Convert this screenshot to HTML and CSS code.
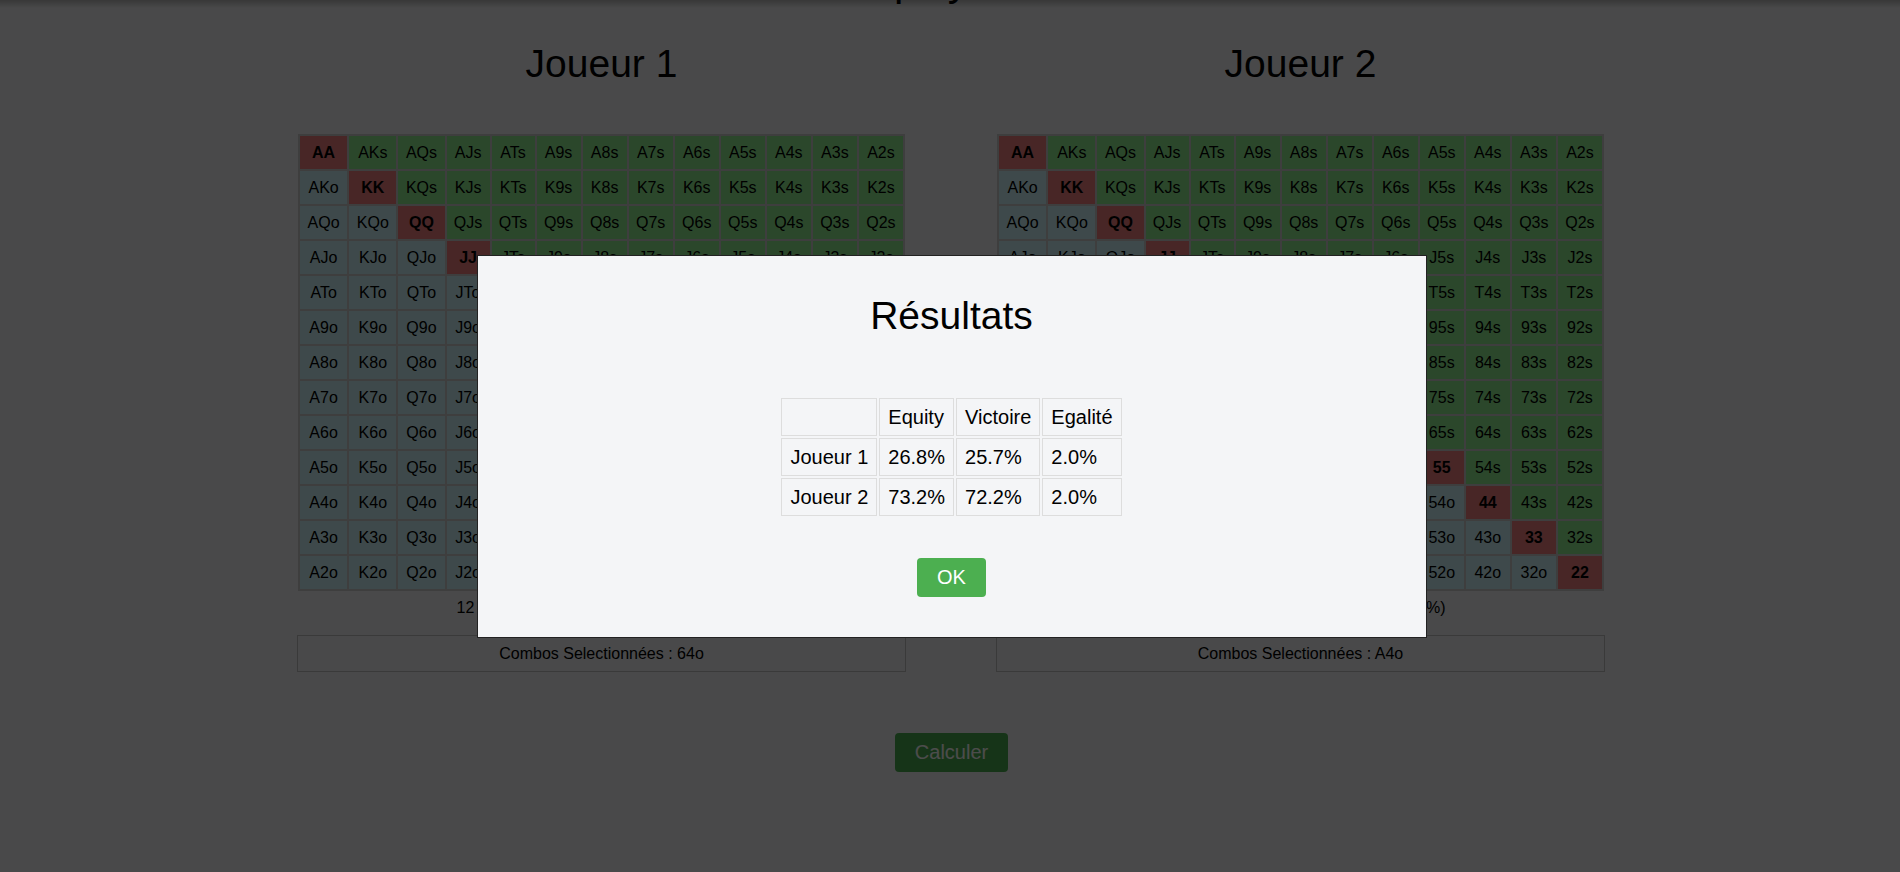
FILE: index.html
```html
<!DOCTYPE html>
<html lang="fr">
<head>
<meta charset="utf-8">
<title>Poker Equity Calculator</title>
<link rel="stylesheet" href="styles.css">
</head>
<body>
<h1 class="page-title">Poker Equity Calculator</h1>
<div class="players">
  <section class="player">
    <h2 class="player-name">Joueur 1</h2>
    <table class="range">
      <tr><td class="p">AA</td><td class="s">AKs</td><td class="s">AQs</td><td class="s">AJs</td><td class="s">ATs</td><td class="s">A9s</td><td class="s">A8s</td><td class="s">A7s</td><td class="s">A6s</td><td class="s">A5s</td><td class="s">A4s</td><td class="s">A3s</td><td class="s">A2s</td></tr>
      <tr><td class="o">AKo</td><td class="p">KK</td><td class="s">KQs</td><td class="s">KJs</td><td class="s">KTs</td><td class="s">K9s</td><td class="s">K8s</td><td class="s">K7s</td><td class="s">K6s</td><td class="s">K5s</td><td class="s">K4s</td><td class="s">K3s</td><td class="s">K2s</td></tr>
      <tr><td class="o">AQo</td><td class="o">KQo</td><td class="p">QQ</td><td class="s">QJs</td><td class="s">QTs</td><td class="s">Q9s</td><td class="s">Q8s</td><td class="s">Q7s</td><td class="s">Q6s</td><td class="s">Q5s</td><td class="s">Q4s</td><td class="s">Q3s</td><td class="s">Q2s</td></tr>
      <tr><td class="o">AJo</td><td class="o">KJo</td><td class="o">QJo</td><td class="p">JJ</td><td class="s">JTs</td><td class="s">J9s</td><td class="s">J8s</td><td class="s">J7s</td><td class="s">J6s</td><td class="s">J5s</td><td class="s">J4s</td><td class="s">J3s</td><td class="s">J2s</td></tr>
      <tr><td class="o">ATo</td><td class="o">KTo</td><td class="o">QTo</td><td class="o">JTo</td><td class="p">TT</td><td class="s">T9s</td><td class="s">T8s</td><td class="s">T7s</td><td class="s">T6s</td><td class="s">T5s</td><td class="s">T4s</td><td class="s">T3s</td><td class="s">T2s</td></tr>
      <tr><td class="o">A9o</td><td class="o">K9o</td><td class="o">Q9o</td><td class="o">J9o</td><td class="o">T9o</td><td class="p">99</td><td class="s">98s</td><td class="s">97s</td><td class="s">96s</td><td class="s">95s</td><td class="s">94s</td><td class="s">93s</td><td class="s">92s</td></tr>
      <tr><td class="o">A8o</td><td class="o">K8o</td><td class="o">Q8o</td><td class="o">J8o</td><td class="o">T8o</td><td class="o">98o</td><td class="p">88</td><td class="s">87s</td><td class="s">86s</td><td class="s">85s</td><td class="s">84s</td><td class="s">83s</td><td class="s">82s</td></tr>
      <tr><td class="o">A7o</td><td class="o">K7o</td><td class="o">Q7o</td><td class="o">J7o</td><td class="o">T7o</td><td class="o">97o</td><td class="o">87o</td><td class="p">77</td><td class="s">76s</td><td class="s">75s</td><td class="s">74s</td><td class="s">73s</td><td class="s">72s</td></tr>
      <tr><td class="o">A6o</td><td class="o">K6o</td><td class="o">Q6o</td><td class="o">J6o</td><td class="o">T6o</td><td class="o">96o</td><td class="o">86o</td><td class="o">76o</td><td class="p">66</td><td class="s">65s</td><td class="s">64s</td><td class="s">63s</td><td class="s">62s</td></tr>
      <tr><td class="o">A5o</td><td class="o">K5o</td><td class="o">Q5o</td><td class="o">J5o</td><td class="o">T5o</td><td class="o">95o</td><td class="o">85o</td><td class="o">75o</td><td class="o">65o</td><td class="p">55</td><td class="s">54s</td><td class="s">53s</td><td class="s">52s</td></tr>
      <tr><td class="o">A4o</td><td class="o">K4o</td><td class="o">Q4o</td><td class="o">J4o</td><td class="o">T4o</td><td class="o">94o</td><td class="o">84o</td><td class="o">74o</td><td class="o">64o</td><td class="o">54o</td><td class="p">44</td><td class="s">43s</td><td class="s">42s</td></tr>
      <tr><td class="o">A3o</td><td class="o">K3o</td><td class="o">Q3o</td><td class="o">J3o</td><td class="o">T3o</td><td class="o">93o</td><td class="o">83o</td><td class="o">73o</td><td class="o">63o</td><td class="o">53o</td><td class="o">43o</td><td class="p">33</td><td class="s">32s</td></tr>
      <tr><td class="o">A2o</td><td class="o">K2o</td><td class="o">Q2o</td><td class="o">J2o</td><td class="o">T2o</td><td class="o">92o</td><td class="o">82o</td><td class="o">72o</td><td class="o">62o</td><td class="o">52o</td><td class="o">42o</td><td class="o">32o</td><td class="p">22</td></tr>
    </table>
    <p class="count">12 combos sélectionnés sur 1326 (0.9%)</p>
    <div class="selection">Combos Selectionnées : 64o</div>
  </section>
  <section class="player">
    <h2 class="player-name">Joueur 2</h2>
    <table class="range">
      <tr><td class="p">AA</td><td class="s">AKs</td><td class="s">AQs</td><td class="s">AJs</td><td class="s">ATs</td><td class="s">A9s</td><td class="s">A8s</td><td class="s">A7s</td><td class="s">A6s</td><td class="s">A5s</td><td class="s">A4s</td><td class="s">A3s</td><td class="s">A2s</td></tr>
      <tr><td class="o">AKo</td><td class="p">KK</td><td class="s">KQs</td><td class="s">KJs</td><td class="s">KTs</td><td class="s">K9s</td><td class="s">K8s</td><td class="s">K7s</td><td class="s">K6s</td><td class="s">K5s</td><td class="s">K4s</td><td class="s">K3s</td><td class="s">K2s</td></tr>
      <tr><td class="o">AQo</td><td class="o">KQo</td><td class="p">QQ</td><td class="s">QJs</td><td class="s">QTs</td><td class="s">Q9s</td><td class="s">Q8s</td><td class="s">Q7s</td><td class="s">Q6s</td><td class="s">Q5s</td><td class="s">Q4s</td><td class="s">Q3s</td><td class="s">Q2s</td></tr>
      <tr><td class="o">AJo</td><td class="o">KJo</td><td class="o">QJo</td><td class="p">JJ</td><td class="s">JTs</td><td class="s">J9s</td><td class="s">J8s</td><td class="s">J7s</td><td class="s">J6s</td><td class="s">J5s</td><td class="s">J4s</td><td class="s">J3s</td><td class="s">J2s</td></tr>
      <tr><td class="o">ATo</td><td class="o">KTo</td><td class="o">QTo</td><td class="o">JTo</td><td class="p">TT</td><td class="s">T9s</td><td class="s">T8s</td><td class="s">T7s</td><td class="s">T6s</td><td class="s">T5s</td><td class="s">T4s</td><td class="s">T3s</td><td class="s">T2s</td></tr>
      <tr><td class="o">A9o</td><td class="o">K9o</td><td class="o">Q9o</td><td class="o">J9o</td><td class="o">T9o</td><td class="p">99</td><td class="s">98s</td><td class="s">97s</td><td class="s">96s</td><td class="s">95s</td><td class="s">94s</td><td class="s">93s</td><td class="s">92s</td></tr>
      <tr><td class="o">A8o</td><td class="o">K8o</td><td class="o">Q8o</td><td class="o">J8o</td><td class="o">T8o</td><td class="o">98o</td><td class="p">88</td><td class="s">87s</td><td class="s">86s</td><td class="s">85s</td><td class="s">84s</td><td class="s">83s</td><td class="s">82s</td></tr>
      <tr><td class="o">A7o</td><td class="o">K7o</td><td class="o">Q7o</td><td class="o">J7o</td><td class="o">T7o</td><td class="o">97o</td><td class="o">87o</td><td class="p">77</td><td class="s">76s</td><td class="s">75s</td><td class="s">74s</td><td class="s">73s</td><td class="s">72s</td></tr>
      <tr><td class="o">A6o</td><td class="o">K6o</td><td class="o">Q6o</td><td class="o">J6o</td><td class="o">T6o</td><td class="o">96o</td><td class="o">86o</td><td class="o">76o</td><td class="p">66</td><td class="s">65s</td><td class="s">64s</td><td class="s">63s</td><td class="s">62s</td></tr>
      <tr><td class="o">A5o</td><td class="o">K5o</td><td class="o">Q5o</td><td class="o">J5o</td><td class="o">T5o</td><td class="o">95o</td><td class="o">85o</td><td class="o">75o</td><td class="o">65o</td><td class="p">55</td><td class="s">54s</td><td class="s">53s</td><td class="s">52s</td></tr>
      <tr><td class="o">A4o</td><td class="o">K4o</td><td class="o">Q4o</td><td class="o">J4o</td><td class="o">T4o</td><td class="o">94o</td><td class="o">84o</td><td class="o">74o</td><td class="o">64o</td><td class="o">54o</td><td class="p">44</td><td class="s">43s</td><td class="s">42s</td></tr>
      <tr><td class="o">A3o</td><td class="o">K3o</td><td class="o">Q3o</td><td class="o">J3o</td><td class="o">T3o</td><td class="o">93o</td><td class="o">83o</td><td class="o">73o</td><td class="o">63o</td><td class="o">53o</td><td class="o">43o</td><td class="p">33</td><td class="s">32s</td></tr>
      <tr><td class="o">A2o</td><td class="o">K2o</td><td class="o">Q2o</td><td class="o">J2o</td><td class="o">T2o</td><td class="o">92o</td><td class="o">82o</td><td class="o">72o</td><td class="o">62o</td><td class="o">52o</td><td class="o">42o</td><td class="o">32o</td><td class="p">22</td></tr>
    </table>
    <p class="count">78 combos sélectionnés sur 1326 (5.9%)</p>
    <div class="selection">Combos Selectionnées : A4o</div>
  </section>
</div>
<div class="actions">
  <button class="btn" type="button">Calculer</button>
</div>

<div class="overlay">
  <div class="modal">
    <h2 class="modal-title">Résultats</h2>
    <table class="results">
      <tr><td></td><td>Equity</td><td>Victoire</td><td>Egalité</td></tr>
      <tr><td>Joueur 1</td><td>26.8%</td><td>25.7%</td><td>2.0%</td></tr>
      <tr><td>Joueur 2</td><td>73.2%</td><td>72.2%</td><td>2.0%</td></tr>
    </table>
    <div class="modal-actions">
      <button class="btn" type="button">OK</button>
    </div>
  </div>
</div>
</body>
</html>
```

FILE: styles.css
```css
* {
  box-sizing: border-box;
}

html,
body {
  margin: 0;
}

body {
  font-family: "Liberation Sans", Arial, sans-serif;
  color: #000;
  background: #f4f5f7 linear-gradient(#bbbbbb, #f4f5f7 8px) no-repeat;
}

.page-title {
  margin: -43px 0 0;
  font-size: 42px;
  line-height: 48px;
  font-weight: normal;
  text-align: center;
}

.players {
  display: flex;
  width: 1400px;
  margin: 0 auto;
  padding-left: 2px;
}

.player {
  flex: 1;
  display: flex;
  flex-direction: column;
  align-items: center;
}

.player-name {
  margin: 36px 0 48px;
  font-size: 39px;
  line-height: 45px;
  font-weight: normal;
}

.range {
  width: 607px;
  border-spacing: 2px;
  background: #cfcfcf;
  font-size: 16px;
}

.range td {
  padding: 7px 4px;
  line-height: 19px;
  text-align: center;
}

.range .s {
  background: #90ee90;
}

.range .o {
  background: #d0f5fa;
}

.range .p {
  background: #f08080;
  font-weight: bold;
}

.count {
  margin: 7px 0 0;
  font-size: 16px;
  line-height: 19px;
}

.selection {
  width: 609px;
  margin-top: 18px;
  padding: 8px;
  border: 1px solid #c4c4c4;
  font-size: 16px;
  line-height: 19px;
  text-align: center;
}

.actions {
  margin-top: 61px;
  padding-left: 3px;
  text-align: center;
}

.btn {
  padding: 8px 20px;
  border: 0;
  border-radius: 4px;
  background: #4caf50;
  color: #fff;
  font-family: "Liberation Sans", Arial, sans-serif;
  font-size: 20px;
  line-height: 23px;
}

.overlay {
  position: fixed;
  inset: 0;
  padding: 255px 0 0 3px;
  background: rgba(0, 0, 0, 0.7);
}

.modal {
  width: 950px;
  margin: 0 auto;
  padding: 20px;
  border: 1px solid #222;
  background: #f4f5f7;
  text-align: center;
}

.modal-title {
  margin: 17px 0 58px;
  font-size: 39px;
  line-height: 45px;
  font-weight: normal;
}

.results {
  margin: 0 auto;
  border-spacing: 2px;
  font-size: 20px;
}

.results td {
  padding: 6px 8px;
  border: 1px solid #ddd;
  line-height: 24px;
  text-align: left;
}

.modal-actions {
  margin: 40px 0 20px;
}
```
